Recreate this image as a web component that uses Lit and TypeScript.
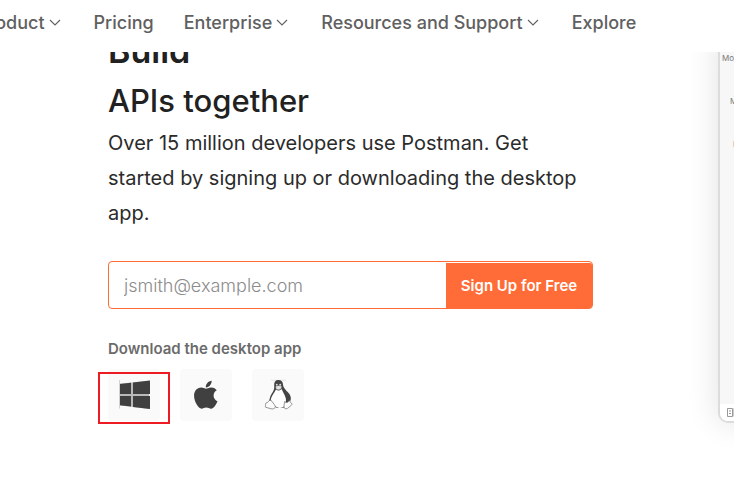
import { LitElement, html, css, svg } from "lit";
import { customElement } from "lit/decorators.js";

const chevron = html`<svg class="chevron" viewBox="0 0 12 8" aria-hidden="true">
  <path d="M1 1 6 6 11 1" fill="none" stroke="currentColor" stroke-width="1.1" />
</svg>`;

const windowsIcon = svg`<svg viewBox="0 0 52 52" aria-hidden="true">
  <path d="M11 14.8 41 11.8V40L11 36.2Z" fill="#b9b9b9" />
  <path d="M11.5 15 23 13.8V25H11.5ZM25 13.6 42 11.5V25H25ZM11.5 27H23V37.6L11.5 36.2ZM25 27H42V40L25 37.9Z" fill="#404040" />
  <path d="M11.5 11V39.500" stroke="#d2d2d2" stroke-width="1" />
</svg>`;

const appleIcon = svg`<svg viewBox="0 0 52 52" aria-hidden="true">
  <g transform="translate(13.800 9.800) scale(.0622)">
    <path fill="#404040" d="M318.700 268.700c-.2-36.700 16.400-64.400 50-84.800-18.800-26.900-47.200-41.700-84.700-44.600-35.500-2.800-74.300 20.700-88.500 20.700-15 0-49.400-19.700-76.400-19.700C63.300 141.200 4 184.800 4 273.500q0 39.300 14.400 81.200c12.800 36.700 59 126.700 107.200 125.200 25.200-.6 43-17.900 75.800-17.900 31.800 0 48.300 17.900 76.400 17.900 48.600-.7 90.400-82.500 102.600-119.300-65.200-30.700-61.700-90-61.700-91.900zm-56.600-164.200c27.300-32.400 24.800-61.900 24-72.500-24.100 1.400-52 16.400-67.900 34.900-17.500 19.800-27.800 44.300-25.600 71.900 26.100 2 49.900-11.400 69.500-34.300z" />
  </g>
</svg>`;

const linuxIcon = svg`<svg viewBox="0 0 52 52" aria-hidden="true">
  <path d="M19 11.300H34" stroke="#dcdcdc" stroke-width=".7" />
  <path d="M26.300 11C23.300 11 22 13 22.200 16C22.400 20 22 21.400 19.800 24.600C18 27.400 17.600 30 17 33L20 35L25 39H31L36 35C39.600 32 39.600 28 37 24.500C33.500 20.500 31.300 19 31 15.500C30.800 12.500 29.500 11 26.300 11Z" fill="#444" />
  <path d="M24 20.500C25.500 22 28 21.800 29.700 20C30.700 23 33 26 33.700 29C34.500 32.500 33.500 37 30.500 38.500C27.500 39.500 24.500 38.800 22.500 36.500L18.700 31.500C19 28 21 25.500 22.300 23.500Z" fill="#fff" />
  <path d="M23.800 17.300Q26.500 16 29.500 17.300L29.300 19.400Q26.500 22 24 19.700Z" fill="#e4e4e4" stroke="#888" stroke-width=".4" />
  <circle cx="24.800" cy="15.700" r=".9" fill="#ddd" /><circle cx="28.200" cy="15.700" r="1" fill="#ddd" />
  <path d="M18 31.200C19.500 31 20.800 33.500 22.300 35.500C24 37.600 23.500 39.700 20.500 39.900C17.700 39.800 16.300 38.700 13.700 38.300C12.800 37.500 14 36 13.600 34.600C13.800 33.300 15.700 34 16.300 32.700C16.700 31.900 17 31.300 18 31.200Z" fill="#fcfcfc" stroke="#777" stroke-width=".8" />
  <path d="M32.800 32.300C33.200 34 35.800 34.200 37 31.800C38.300 31.500 37.900 33.500 39.800 34.700C40.600 35.800 38.600 36.600 36.900 38.300C35.300 40 33.200 40.300 32.200 38.800C31.700 37 32.300 34 32.800 32.300Z" fill="#fcfcfc" stroke="#777" stroke-width=".8" />
</svg>`;

@customElement("app-root")
export class AppRoot extends LitElement {
  static styles = css`
    :host {
      display: block;
      min-height: 100vh;
      overflow: hidden;
      background: #fff;
      color: #212121;
      font-family: Inter, "Liberation Sans", sans-serif;
    }
    * { box-sizing: border-box; }
    .bar {
      position: relative;
      z-index: 1;
      height: 52px;
      padding-bottom: 6px;
      background: #fff;
    }
    nav {
      display: flex;
      align-items: center;
      gap: 30px;
      height: 100%;
      margin-left: -23px;
    }
    nav a {
      display: flex;
      align-items: center;
      gap: 4px;
      flex: none;
      color: #606060;
      font-size: 18px;
      font-weight: 500;
      line-height: 28px;
      text-decoration: none;
      white-space: nowrap;
    }
    .chevron { width: 12px; height: 8px; margin-right: 3px; }
    .hero {
      display: flex;
      justify-content: space-between;
      padding-left: 108px;
      overflow: hidden;
    }
    .copy { flex: 0 1 485px; min-width: 0; margin-top: -28px; }
    h1 {
      margin: 0;
      padding-top: 1px;
      font-size: 31px;
      font-weight: 500;
      line-height: 50px;
    }
    h1 span { display: block; }
    .large { font-size: 34px; font-weight: 600; line-height: 51px; }
    .lead {
      max-width: 480px;
      margin: 0 0 30px;
      color: #2b2b2b;
      font-size: 20px;
      line-height: 35px;
    }
    form {
      display: flex;
      height: 48px;
      border: 1px solid #ff6c37;
      border-radius: 4px;
      padding-top: 1px;
    }
    input {
      flex: 1;
      min-width: 0;
      padding: 0 15px;
      border: 0;
      outline: 0;
      background: none;
      font: 300 18px Inter, sans-serif;
    }
    input::placeholder { color: #8c8c8c; opacity: 1; }
    form button {
      flex: none;
      width: 146px;
      padding: 0;
      border: 0;
      border-radius: 0 2px 2px 0;
      background: #ff6c37;
      color: #fff;
      font: 600 15px Inter, sans-serif;
    }
    h2 {
      margin: 28px 0 8px;
      color: #6b6b6b;
      font-size: 15px;
      font-weight: 600;
      line-height: 24px;
    }
    .downloads { display: flex; gap: 20px; }
    .tile {
      position: relative;
      width: 52px;
      height: 52px;
      border-radius: 4px;
      background: #fafafa;
    }
    .tile svg { display: block; width: 52px; height: 52px; }
    .marked::after {
      content: "";
      position: absolute;
      inset: 3px -10px -3px;
      border: 2px solid #ed1c24;
    }
    .preview {
      display: flex;
      flex-direction: column;
      justify-content: space-between;
      flex: none;
      width: 36px;
      height: 391px;
      margin: -20px -20px 77px 0;
      border: 2px solid #dcdcdc;
      border-right: 0;
      border-radius: 0 0 0 10px;
      background: #f7f7f7;
      box-shadow: 0 0 32px rgba(0, 0, 0, 0.12);
      color: #777;
      font-size: 8px;
      line-height: 12px;
      white-space: nowrap;
    }
    .labels { display: grid; gap: 31px; padding: 18px 0 0 2px; }
    .labels span + span { padding-left: 8px; }
    .labels span + span + span { padding-left: 11px; }
    .status {
      height: 17px;
      padding: 4px 0 0 7px;
      border-radius: 0 0 0 8px;
      background: #fff;
    }
    .status svg { display: block; width: 16px; height: 9px; }
  `;

  render() {
    return html`
      <header class="bar">
        <nav aria-label="Main">
          <a href="#product">Product ${chevron}</a>
          <a href="#pricing">Pricing</a>
          <a href="#enterprise">Enterprise ${chevron}</a>
          <a href="#resources">Resources and Support ${chevron}</a>
          <a href="#explore">Explore</a>
        </nav>
      </header>
      <main class="hero">
        <section class="copy">
          <h1><span class="large">Build</span><span>APIs together</span></h1>
          <p class="lead">
            Over 15 million developers use Postman. Get started by signing up or
            downloading the desktop app.
          </p>
          <form>
            <input type="email" aria-label="Email" placeholder="jsmith@example.com" />
            <button type="button">Sign Up for Free</button>
          </form>
          <h2>Download the desktop app</h2>
          <div class="downloads">
            <a class="tile marked" href="#windows" aria-label="Windows">${windowsIcon}</a>
            <a class="tile" href="#mac" aria-label="macOS">${appleIcon}</a>
            <a class="tile" href="#linux" aria-label="Linux">${linuxIcon}</a>
          </div>
        </section>
        <aside class="preview">
          <div class="labels"><span>Mock</span><span>M</span><span>I</span></div>
          <div class="status">
            <svg viewBox="0 0 16 9" aria-hidden="true">
              <path d="M.5.5H5.500V8.500H.5ZM7 .5H15V8.500H7ZM2 3H4M2 5.500H4" fill="none" stroke="#999" />
            </svg>
          </div>
        </aside>
      </main>
    `;
  }
}
